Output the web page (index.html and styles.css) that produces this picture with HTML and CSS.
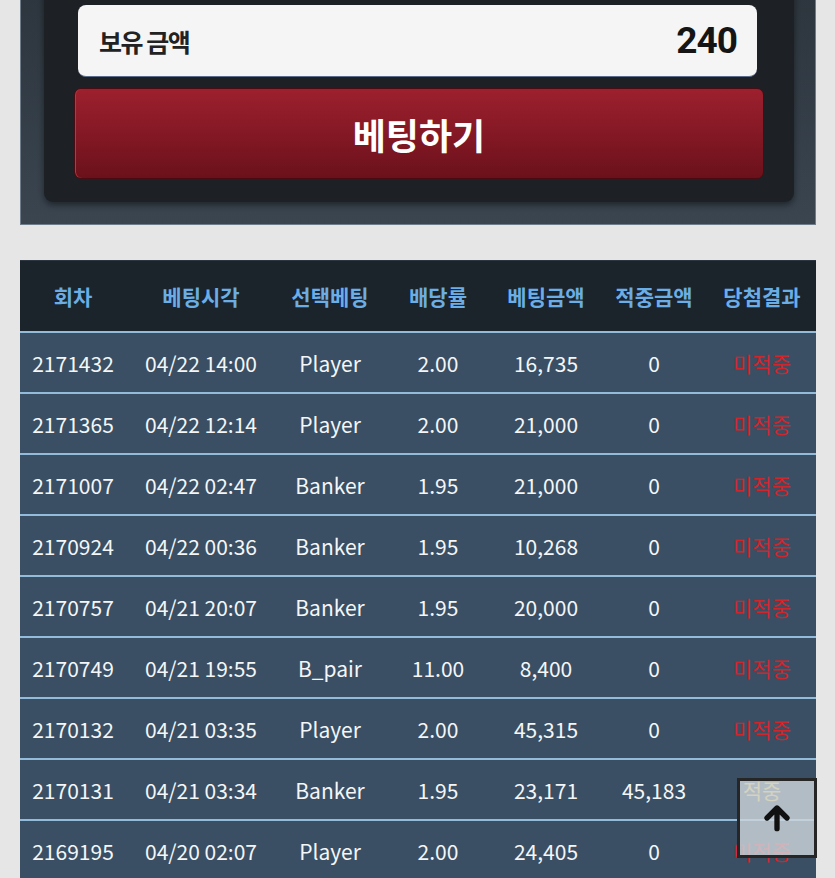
FILE: index.html
```html
<!DOCTYPE html>
<html>
    <head>
        <title>베팅 내역</title>
        <link rel="stylesheet" href="styles.css">
    </head>
    <body>
        <div class="bet_panel">
            <div class="bet_inner">
                <div class="balance">
                    <span class="balance_label">보유 금액</span>
                    <span class="balance_value">240</span>
                </div>
                <button class="bet_button">베팅하기</button>
            </div>
        </div>

        <div class="history">
            <div class="row head">
                <div>회차</div>
                <div>베팅시각</div>
                <div>선택베팅</div>
                <div>배당률</div>
                <div>베팅금액</div>
                <div>적중금액</div>
                <div>당첨결과</div>
            </div>
            <div class="row">
                <div>2171432</div><div>04/22 14:00</div><div>Player</div><div>2.00</div><div>16,735</div><div>0</div><div class="lose">미적중</div>
            </div>
            <div class="row">
                <div>2171365</div><div>04/22 12:14</div><div>Player</div><div>2.00</div><div>21,000</div><div>0</div><div class="lose">미적중</div>
            </div>
            <div class="row">
                <div>2171007</div><div>04/22 02:47</div><div>Banker</div><div>1.95</div><div>21,000</div><div>0</div><div class="lose">미적중</div>
            </div>
            <div class="row">
                <div>2170924</div><div>04/22 00:36</div><div>Banker</div><div>1.95</div><div>10,268</div><div>0</div><div class="lose">미적중</div>
            </div>
            <div class="row">
                <div>2170757</div><div>04/21 20:07</div><div>Banker</div><div>1.95</div><div>20,000</div><div>0</div><div class="lose">미적중</div>
            </div>
            <div class="row">
                <div>2170749</div><div>04/21 19:55</div><div>B_pair</div><div>11.00</div><div>8,400</div><div>0</div><div class="lose">미적중</div>
            </div>
            <div class="row">
                <div>2170132</div><div>04/21 03:35</div><div>Player</div><div>2.00</div><div>45,315</div><div>0</div><div class="lose">미적중</div>
            </div>
            <div class="row">
                <div>2170131</div><div>04/21 03:34</div><div>Banker</div><div>1.95</div><div>23,171</div><div>45,183</div><div class="win">적중</div>
            </div>
            <div class="row">
                <div>2169195</div><div>04/20 02:07</div><div>Player</div><div>2.00</div><div>24,405</div><div>0</div><div class="lose">미적중</div>
            </div>
        </div>

        <!-- scroll to top -->
        <div class="to_top">
            <svg width="32" height="32" viewBox="0 0 24 24">
                <path d="M12 20 V6 M4.5 12 L12 4.5 L19.5 12" fill="none" stroke="#111" stroke-width="4" stroke-linecap="round" stroke-linejoin="round"/>
            </svg>
        </div>
    </body>
</html>
```

FILE: styles.css
```css
body {
    margin: 0;
    background-color: #e6e6e6;
    font-family: "Noto Sans CJK KR", "Noto Sans", sans-serif;
    overflow: hidden;
}
.bet_panel {
    margin: -25px 19px 0 20px;
    padding: 0 21px 22px 23px;
    background: linear-gradient(#2c343c, #3a4550);
    border: 1px solid #6f7c89;
    border-top: none;
}
.bet_inner {
    background-color: #1d2125;
    border-radius: 9px;
    padding: 30px 30px 23px 30px;
    box-shadow: 0 3px 6px rgba(0, 0, 0, 0.45);
}
.balance {
    display: flex;
    justify-content: space-between;
    align-items: center;
    height: 72px;
    margin: 0 7px 11px 4px;
    padding: 0 20px 0 21px;
    background-color: #f5f5f5;
    border-radius: 8px;
    border-bottom: 1px solid #5b6c8a;
    box-sizing: border-box;
}
.balance_label {
    font-size: 25px;
    font-weight: bold;
    color: #222;
    letter-spacing: -1.5px;
}
.balance_value {
    font-family: Roboto, "Liberation Sans", sans-serif;
    font-size: 37px;
    font-weight: bold;
    color: #151515;
    letter-spacing: -1px;
}
.bet_button {
    display: block;
    width: 100%;
    height: 91px;
    border: 1px solid #4a0c13;
    border-radius: 7px;
    background: linear-gradient(#9d202e, #6b111b);
    color: white;
    font-family: "Noto Sans CJK KR", sans-serif;
    font-size: 36px;
    font-weight: bold;
    box-shadow: inset 1px 0 0 #b43a3f;
}
.history {
    margin: 35px 19px 0 20px;
}
.row {
    display: grid;
    grid-template-columns: 106px 150px repeat(5, 1fr);
    height: 61px;
    align-items: center;
    text-align: center;
    background-color: #3a4f63;
    border-top: 2px solid #93bcda;
    box-sizing: border-box;
    color: #f4f6f8;
    font-size: 21px;
}
.row.head {
    height: 71px;
    background-color: #1b232b;
    border-top: 1px solid #2c3640;
    color: #6aaee5;
    font-weight: bold;
}
.lose {
    color: #d0262b;
}
.win {
    color: #f2c64a;
}
.to_top {
    position: absolute;
    left: 737px;
    top: 778px;
    width: 80px;
    height: 80px;
    box-sizing: border-box;
    border: 3px solid #262626;
    background-color: rgba(205, 212, 219, 0.82);
    display: flex;
    align-items: center;
    justify-content: center;
}
```
